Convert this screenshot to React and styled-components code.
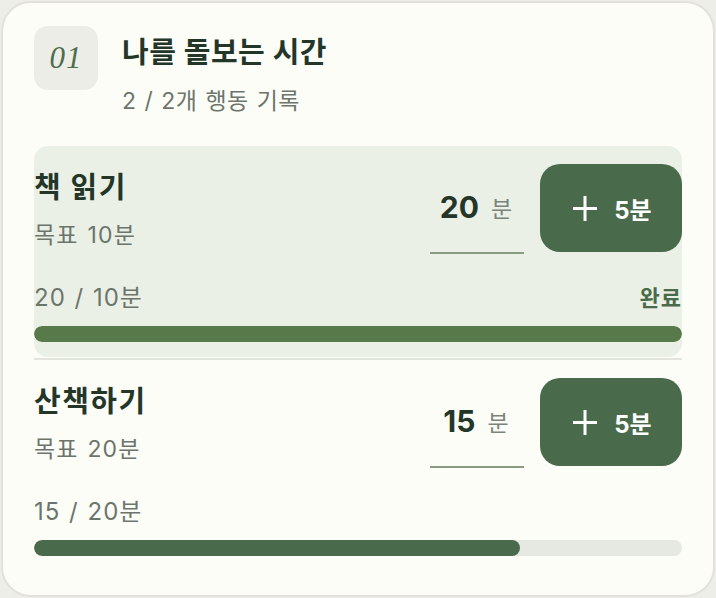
import React, { useState } from 'react';
import styled, { createGlobalStyle, css } from 'styled-components';

const GlobalStyle = createGlobalStyle`
  html, body {
    margin: 0;
    padding: 0;
    background: #eeeee8;
  }
  body {
    font-family: Inter, "Noto Sans CJK KR", "Noto Sans", sans-serif;
    -webkit-font-smoothing: antialiased;
  }
  * { box-sizing: border-box; }
`;

const Card = styled.div`
  margin: 1px;
  width: 714px;
  height: 596px;
  background: #fdfdf8;
  border: 2px solid #e2e2da;
  border-radius: 30px;
  padding: 23px 31px 22px;
`;

const Header = styled.div`
  display: flex;
  align-items: flex-start;
  gap: 24px;
`;

const Badge = styled.div`
  width: 64px;
  height: 64px;
  border-radius: 14px;
  background: #ededE7;
  display: flex;
  align-items: center;
  justify-content: center;
  font-family: "Liberation Serif", "DejaVu Serif", serif;
  font-style: italic;
  font-size: 31px;
  color: #4d6e4d;
  letter-spacing: 1px;
`;

const HeaderText = styled.div`
  display: flex;
  flex-direction: column;
  gap: 17px;
  padding-top: 10px;
`;

const Title = styled.div`
  font-size: 29px;
  line-height: 34px;
  height: 34px;
  font-weight: 700;
  color: #243628;
  letter-spacing: 0.5px;
`;

const Sub = styled.div`
  font-size: 23px;
  line-height: 28px;
  height: 28px;
  color: #6c756c;
  letter-spacing: 0.5px;
  word-spacing: 1px;
`;

const List = styled.div`
  margin-top: 31px;
  display: flex;
  flex-direction: column;
`;

const Item = styled.div`
  padding: 18px 0 15px;
  border-radius: 14px;
  ${p =>
    p.done &&
    css`
      background: #ebf0e7;
    `}
`;

const Divider = styled.div`
  height: 2px;
  background: #e3e5dc;
  margin-top: 1px;
`;

const Row = styled.div`
  display: flex;
  align-items: flex-start;
`;

const Info = styled.div`
  flex: 1;
  display: flex;
  flex-direction: column;
  gap: 16px;
  padding-top: 7px;
`;

const ItemName = styled.div`
  font-size: 29px;
  line-height: 34px;
  height: 34px;
  font-weight: 700;
  color: #243628;
  letter-spacing: 1.5px;
`;

const Goal = styled.div`
  font-size: 23px;
  line-height: 28px;
  height: 28px;
  color: #6c756c;
  letter-spacing: 1.2px;
  word-spacing: 1px;
`;

const Minutes = styled.label`
  width: 94px;
  height: 90px;
  display: flex;
  align-items: center;
  justify-content: center;
  gap: 12px;
  border-bottom: 2px solid #8b9a84;
  margin-right: 16px;
  padding: 0 2px 3px 0;
`;

const MinuteValue = styled.span`
  font-size: 30px;
  font-weight: 700;
  color: #243628;
`;

const Unit = styled.span`
  font-size: 23px;
  color: #7a857a;
`;

const AddButton = styled.button`
  width: 142px;
  height: 88px;
  border: none;
  border-radius: 20px;
  background: #4a6b4b;
  color: #ffffff;
  display: flex;
  align-items: center;
  justify-content: center;
  gap: 16px;
  font-family: inherit;
  font-size: 24px;
  font-weight: 700;
  cursor: pointer;
  padding: 0 0 0 2px;
`;

const ProgressMeta = styled.div`
  display: flex;
  justify-content: space-between;
  align-items: center;
  height: 28px;
  margin-top: 30px;
`;

const ProgressText = styled.div`
  font-size: 24px;
  line-height: 28px;
  color: #6c756c;
  letter-spacing: 1px;
  word-spacing: 1px;
`;

const DoneLabel = styled.div`
  font-size: 22px;
  line-height: 28px;
  font-weight: 700;
  color: #4a6b4b;
  letter-spacing: 1px;
`;

const Track = styled.div`
  margin-top: 14px;
  height: 16px;
  border-radius: 8px;
  background: #e6e9e1;
  overflow: hidden;
`;

const Fill = styled.div`
  height: 100%;
  border-radius: 8px;
  background: ${p => (p.done ? '#587a4a' : '#4a6b4b')};
`;

function PlusIcon() {
  return (
    <svg width="26" height="27" viewBox="0 0 26 27">
      <path d="M13 1v25M1 13.5h24" stroke="#fff" strokeWidth="3" />
    </svg>
  );
}

function Activity({ item, onAdd }) {
  const done = item.value >= item.goal;
  const pct = Math.min(100, (item.value / item.goal) * 100);
  return (
    <Item done={done}>
      <Row>
        <Info>
          <ItemName>{item.name}</ItemName>
          <Goal>목표 {item.goal}분</Goal>
        </Info>
        <Minutes>
          <MinuteValue>{item.value}</MinuteValue>
          <Unit>분</Unit>
        </Minutes>
        <AddButton onClick={() => onAdd(item.id)}>
          <PlusIcon />
          <span>5분</span>
        </AddButton>
      </Row>
      <ProgressMeta>
        <ProgressText>
          {item.value} / {item.goal}분
        </ProgressText>
        {done && <DoneLabel>완료</DoneLabel>}
      </ProgressMeta>
      <Track>
        <Fill done={done} style={{ width: `${pct}%` }} />
      </Track>
    </Item>
  );
}

export default function App() {
  const [items, setItems] = useState([
    { id: 1, name: '책 읽기', goal: 10, value: 20 },
    { id: 2, name: '산책하기', goal: 20, value: 15 },
  ]);

  const onAdd = id =>
    setItems(items.map(it => (it.id === id ? { ...it, value: it.value + 5 } : it)));

  return (
    <>
      <GlobalStyle />
      <Card>
        <Header>
          <Badge>01</Badge>
          <HeaderText>
            <Title>나를 돌보는 시간</Title>
            <Sub>2 / 2개 행동 기록</Sub>
          </HeaderText>
        </Header>
        <List>
          {items.map((it, i) => (
            <React.Fragment key={it.id}>
              {i > 0 && <Divider />}
              <Activity item={it} onAdd={onAdd} />
            </React.Fragment>
          ))}
        </List>
      </Card>
    </>
  );
}
